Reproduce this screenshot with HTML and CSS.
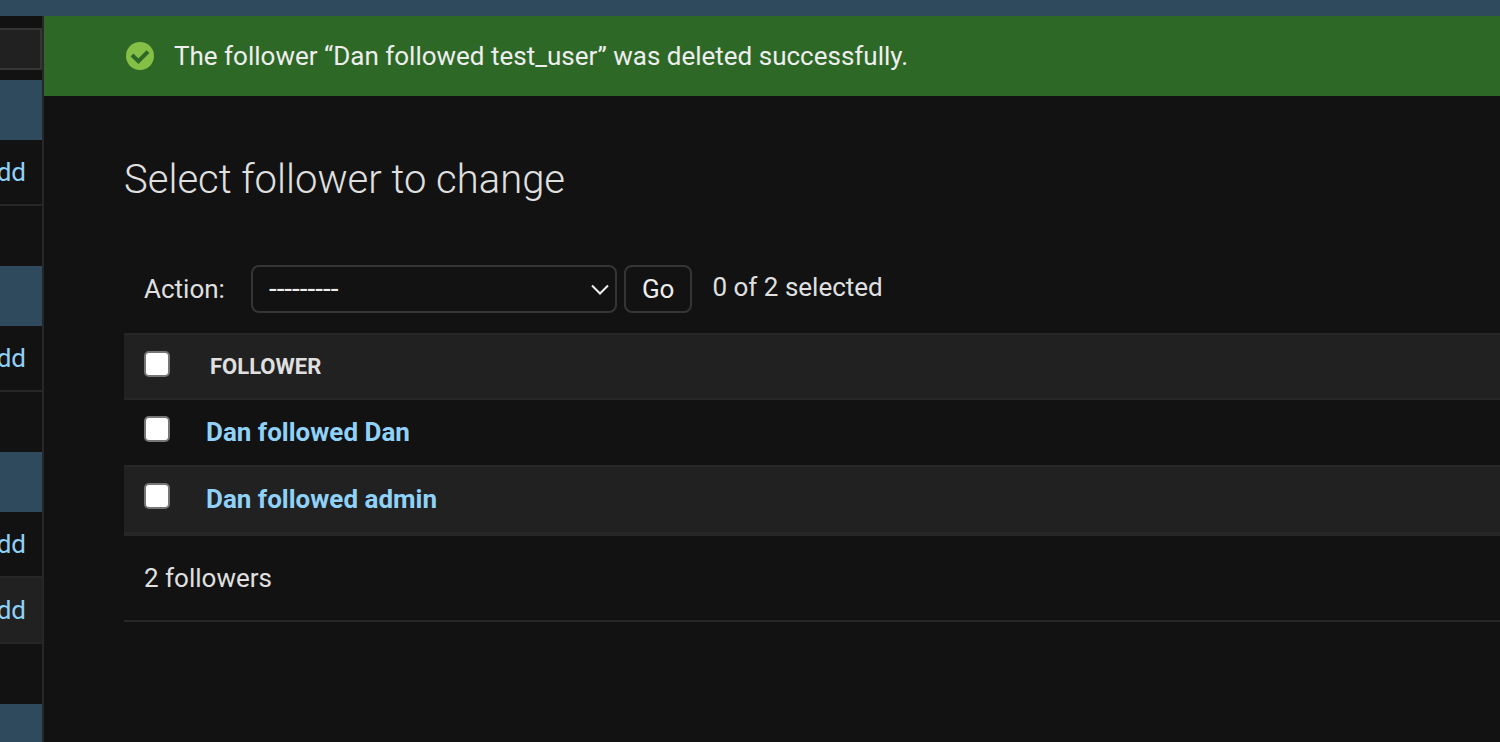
FILE: index.html
```html
<!DOCTYPE html>
<html lang="en">
<head>
<meta charset="utf-8">
<title>Select follower to change</title>
<link rel="stylesheet" href="styles.css">
</head>
<body>
<header class="site-header"></header>
<div class="main">
  <nav class="sidebar" aria-label="Sidebar">
    <input class="nav-filter" type="search" aria-label="Filter navigation items">
    <section class="module">
      <div class="caption"></div>
      <div class="model-row"><a href="#">Add</a></div>
    </section>
    <section class="module">
      <div class="caption"></div>
      <div class="model-row"><a href="#">Add</a></div>
    </section>
    <section class="module">
      <div class="caption"></div>
      <div class="model-row"><a href="#">Add</a></div>
      <div class="model-row current"><a href="#">Add</a></div>
    </section>
    <section class="module">
      <div class="caption"></div>
    </section>
  </nav>
  <div class="page">
    <div class="message" role="status">
      <svg class="message-icon" viewBox="0 0 28 28" aria-hidden="true">
        <circle cx="14" cy="14" r="14" fill="#84bf46"/>
        <path d="M6 13 12.4 19.2 22 9.6" fill="none" stroke="#2e6827" stroke-width="4"/>
      </svg>
      <span>The follower “Dan followed test_user” was deleted successfully.</span>
    </div>
    <main class="content">
      <h1>Select follower to change</h1>
      <form class="changelist">
        <div class="actions">
          <label for="action">Action:</label>
          <div class="select-wrap">
            <select id="action"><option>---------</option></select>
            <svg class="chevron" viewBox="0 0 18 12" aria-hidden="true">
              <path d="M1 1.5 9 9.5 17 1.5" fill="none" stroke="#eee" stroke-width="2"/>
            </svg>
          </div>
          <button type="submit">Go</button>
          <span class="counter">0 of 2 selected</span>
        </div>
        <table class="results">
          <thead>
            <tr>
              <th class="check" scope="col"><input type="checkbox" aria-label="Select all followers"></th>
              <th class="name" scope="col">FOLLOWER</th>
            </tr>
          </thead>
          <tbody>
            <tr>
              <td class="check"><input type="checkbox" aria-label="Select Dan followed Dan"></td>
              <th class="name" scope="row"><a href="#">Dan followed Dan</a></th>
            </tr>
            <tr>
              <td class="check"><input type="checkbox" aria-label="Select Dan followed admin"></td>
              <th class="name" scope="row"><a href="#">Dan followed admin</a></th>
            </tr>
          </tbody>
        </table>
        <p class="paginator">2 followers</p>
      </form>
    </main>
  </div>
</div>
</body>
</html>
```

FILE: styles.css
```css
* {
  box-sizing: border-box;
}

body {
  margin: 0;
  height: 100vh;
  display: flex;
  flex-direction: column;
  overflow: hidden;
  background: #121212;
  color: #e0e0e0;
  font: 26px/32px Roboto, sans-serif;
}

a {
  color: #90d1f7;
  text-decoration: none;
}

.site-header {
  flex: none;
  height: 16px;
  background: #2f4a5c;
}

.main {
  flex: 1;
  min-height: 0;
  display: flex;
}

/* Sidebar, scrolled so that only its right edge shows */
.sidebar {
  flex: none;
  width: 44px;
  padding-top: 12px;
  border-right: 2px solid #272727;
  overflow: hidden;
}

.nav-filter {
  display: block;
  width: 100%;
  height: 42px;
  margin: 0 0 10px;
  border: 2px solid #353535;
  border-left: 0;
  border-radius: 0;
  background: #212121;
  color: #e0e0e0;
  font: inherit;
  appearance: none;
}

.module {
  margin-bottom: 60px;
}

.caption {
  height: 60px;
  background: #2f4a5c;
}

.model-row {
  display: flex;
  justify-content: flex-end;
  padding: 16px 16px 16px 0;
  border-bottom: 2px solid #272727;
}

.current {
  background: #212121;
}

.page {
  flex: 1;
  min-width: 0;
}

.message {
  display: flex;
  align-items: center;
  gap: 20px;
  padding: 24px 82px;
  background: #2e6827;
  color: #eee;
}

.message-icon {
  flex: none;
  width: 28px;
  height: 28px;
}

.content {
  padding: 60px 0 0 80px;
}

h1 {
  margin: 0 0 61px;
  font-size: 40px;
  line-height: 48px;
  font-weight: 300;
}

.actions {
  display: flex;
  align-items: center;
  padding: 0 20px 20px;
}

.select-wrap {
  position: relative;
  width: 366px;
  margin: 0 7px 0 26px;
}

select {
  display: block;
  width: 100%;
  height: 48px;
  padding: 0 40px 0 16px;
  border: 2px solid #353535;
  border-radius: 8px;
  background: #121212;
  color: #eee;
  font: inherit;
  font-size: 28px;
  appearance: none;
}

.chevron {
  position: absolute;
  right: 8px;
  top: 19px;
  width: 18px;
  height: 12px;
  pointer-events: none;
}

button {
  height: 48px;
  padding: 0 16px;
  border: 2px solid #353535;
  border-radius: 8px;
  background: #121212;
  color: #eee;
  font: inherit;
}

.counter {
  margin-left: 20px;
  padding-bottom: 4px;
}

.results {
  width: 100%;
  border-collapse: separate;
  border-spacing: 0;
}

.results th,
.results td {
  height: 67px;
  padding: 0;
  border-bottom: 2px solid #272727;
  text-align: left;
  font-weight: 700;
}

.results thead th {
  border-top: 2px solid #272727;
  background: #212121;
  font-size: 22px;
}

.results .check {
  width: 66px;
  padding: 0 20px 6px;
}

.results tbody .check {
  padding-bottom: 8px;
}

.results tbody .name {
  padding: 0 0 2px 16px;
}

.results thead .name {
  padding-left: 20px;
}

.results tbody tr:nth-child(even) {
  background: #212121;
}

.results input {
  display: block;
  width: 26px;
  height: 26px;
  margin: 0;
  border: 2px solid #767676;
  border-radius: 5px;
  background: #fff;
  appearance: none;
}

.paginator {
  margin: 0;
  padding: 26px 20px;
  border-top: 2px solid #272727;
  border-bottom: 2px solid #272727;
}
```
